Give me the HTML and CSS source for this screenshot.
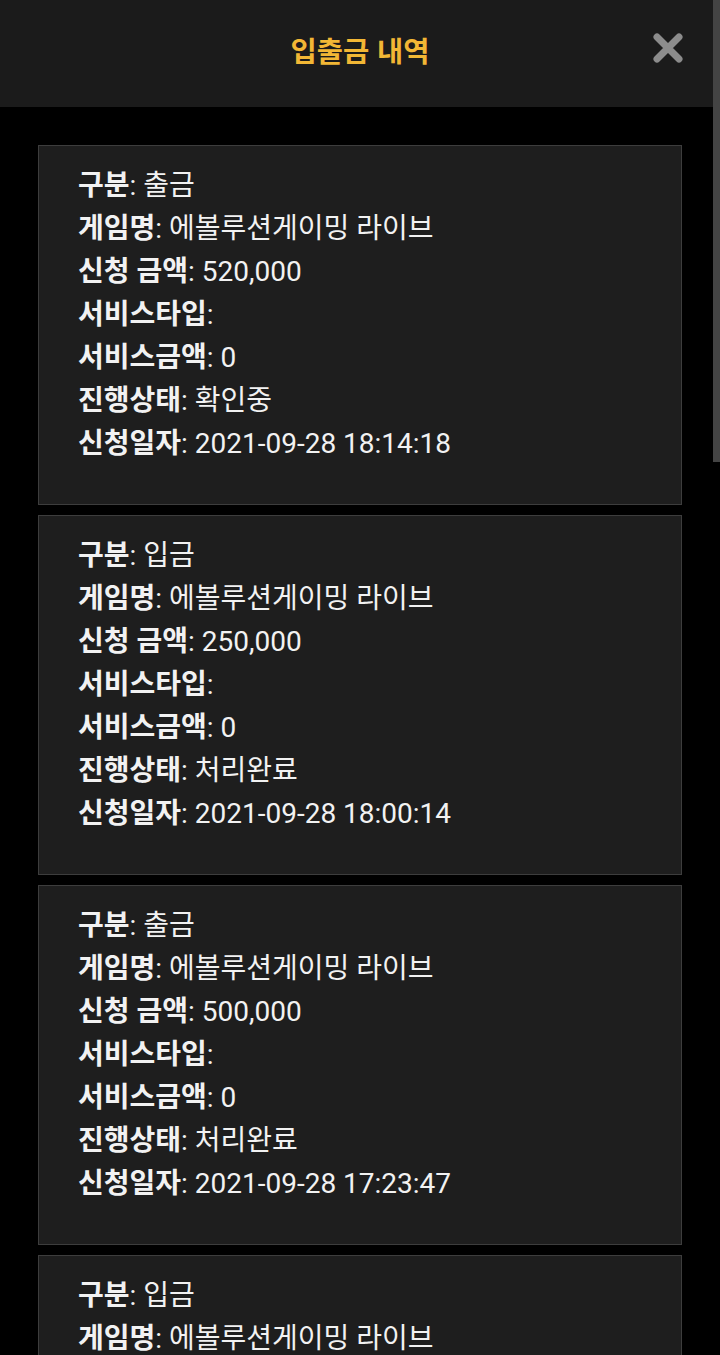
FILE: index.html
```html
<!DOCTYPE html>
<html lang="ko">
<head>
<meta charset="utf-8">
<title>입출금 내역</title>
<link rel="stylesheet" href="styles.css">
</head>
<body>
<div class="scrollbar"></div>
<header class="header">
  <h1 class="title">입출금 내역</h1>
  <button class="close" aria-label="닫기">
    <svg width="32" height="32" viewBox="0 0 32 32"><path d="M5 5 L27 27 M27 5 L5 27" stroke="#8c8c8c" stroke-width="7" stroke-linecap="round"/></svg>
  </button>
</header>
<main class="list">
  <section class="card">
    <p><b>구분</b>: 출금</p>
    <p><b>게임명</b>: 에볼루션게이밍 라이브</p>
    <p><b>신청 금액</b>: 520,000</p>
    <p><b>서비스타입</b>:</p>
    <p><b>서비스금액</b>: 0</p>
    <p><b>진행상태</b>: 확인중</p>
    <p><b>신청일자</b>: 2021-09-28 18:14:18</p>
  </section>
  <section class="card">
    <p><b>구분</b>: 입금</p>
    <p><b>게임명</b>: 에볼루션게이밍 라이브</p>
    <p><b>신청 금액</b>: 250,000</p>
    <p><b>서비스타입</b>:</p>
    <p><b>서비스금액</b>: 0</p>
    <p><b>진행상태</b>: 처리완료</p>
    <p><b>신청일자</b>: 2021-09-28 18:00:14</p>
  </section>
  <section class="card">
    <p><b>구분</b>: 출금</p>
    <p><b>게임명</b>: 에볼루션게이밍 라이브</p>
    <p><b>신청 금액</b>: 500,000</p>
    <p><b>서비스타입</b>:</p>
    <p><b>서비스금액</b>: 0</p>
    <p><b>진행상태</b>: 처리완료</p>
    <p><b>신청일자</b>: 2021-09-28 17:23:47</p>
  </section>
  <section class="card">
    <p><b>구분</b>: 입금</p>
    <p><b>게임명</b>: 에볼루션게이밍 라이브</p>
  </section>
</main>
</body>
</html>
```

FILE: styles.css
```css
html, body {
  margin: 0;
  padding: 0;
  background: #000;
  font-family: Roboto, "Noto Sans CJK KR", "Noto Sans", sans-serif;
  color: #f2f2f2;
  overflow: hidden;
}

.scrollbar {
  position: fixed;
  top: 0;
  right: 0;
  width: 7px;
  height: 462px;
  background: #444;
  z-index: 10;
}

.header {
  height: 107px;
  background: #1b1b1b;
  display: flex;
  align-items: center;
  justify-content: center;
  position: relative;
}

.title {
  margin: 0 0 8px 0;
  font-size: 28.5px;
  font-weight: 700;
  color: #f2b735;
  font-family: "Noto Sans CJK KR", sans-serif;
}

.close {
  position: absolute;
  right: 36px;
  top: 32px;
  width: 32px;
  height: 32px;
  padding: 0;
  border: 0;
  background: none;
  display: flex;
}

.list {
  padding: 38px 38px 0 38px;
  display: flex;
  flex-direction: column;
  gap: 10px;
}

.card {
  background: #1e1e1e;
  border: 1px solid #3d3d3d;
  height: 360px;
  padding: 18px 0 0 39px;
  box-sizing: border-box;
  overflow: hidden;
}

.card p {
  margin: 0;
  font-size: 28px;
  line-height: 43px;
  white-space: nowrap;
}

.card b {
  font-weight: 700;
}
```
